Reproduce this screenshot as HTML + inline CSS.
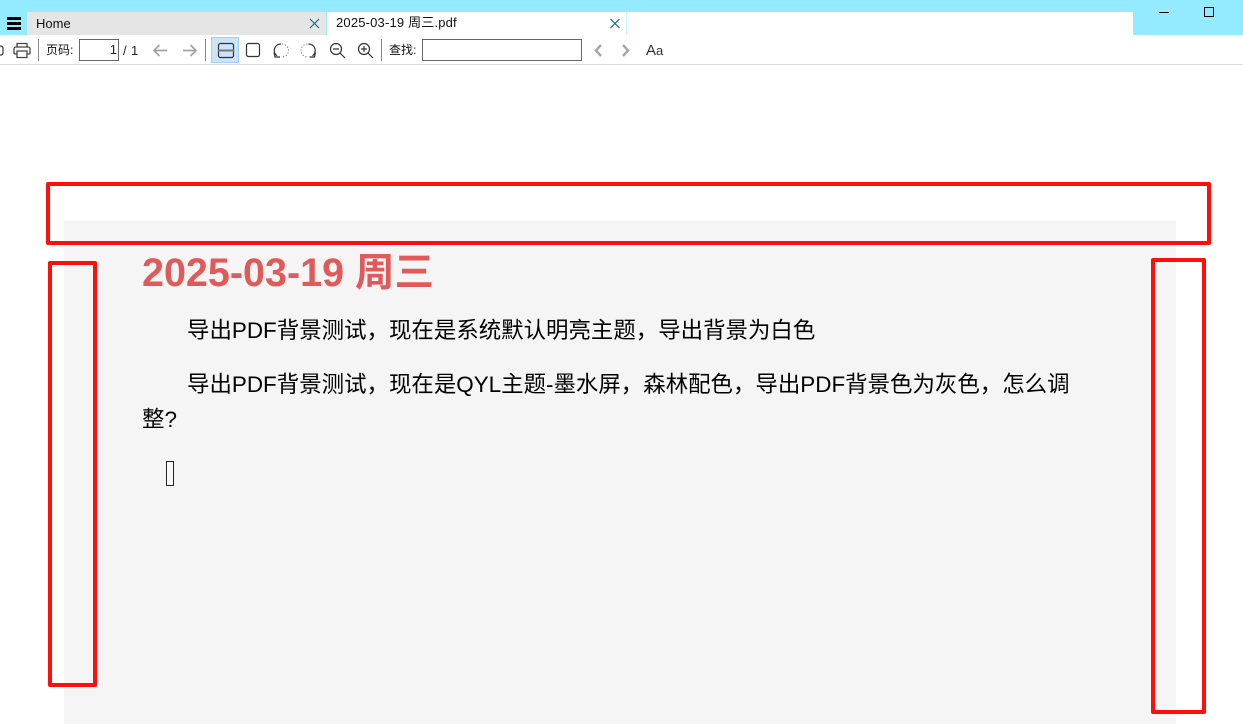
<!DOCTYPE html>
<html lang="zh"><head><meta charset="utf-8"><title>PDF</title>
<style>
html,body{margin:0;padding:0;width:1243px;height:724px;overflow:hidden;background:#fff;font-family:"Liberation Sans","Noto Sans CJK SC",sans-serif;color:#000}
.a{position:absolute}
.t{position:absolute;white-space:nowrap}
.sep{position:absolute;top:39px;width:1px;height:22px;background:#888}
svg{position:absolute;overflow:visible}
</style></head><body>
<div class="a" style="left:0;top:0;width:1243px;height:35px;background:#94ebff"></div>
<div class="a" style="left:0;top:35px;width:1243px;height:29px;background:#fff"></div>
<div class="a" style="left:0;top:64px;width:1243px;height:1px;background:#dcdcdc"></div>
<div class="a" style="left:27px;top:12px;width:299px;height:23px;background:#e5e5e5"></div>
<div class="a" style="left:327px;top:12px;width:806px;height:23px;background:#fff"></div>
<div class="a" style="left:626px;top:12px;width:1px;height:23px;background:#c8f3ff"></div>
<div class="a" style="left:7px;top:17px;width:14px;height:3px;background:#000"></div>
<div class="a" style="left:7px;top:22px;width:14px;height:3px;background:#000"></div>
<div class="a" style="left:7px;top:27px;width:14px;height:3px;background:#000"></div>
<div class="t" style="left:36px;top:15px;font-size:13px;line-height:17px;color:#111">Home</div>
<div class="t" style="left:336px;top:14px;font-size:13px;line-height:17px;color:#111;letter-spacing:.18px">2025-03-19 周三.pdf</div>
<svg style="left:0;top:0" width="1243" height="70" fill="none">
<path d="M310 19l9 9M319 19l-9 9M610.500 19l9 9M619.500 19l-9 9" stroke="#0d6e82" stroke-width="1.200"/>
<path d="M1159 12.500h10" stroke="#000"/>
<rect x="1204.500" y="7.500" width="9" height="9" stroke="#000"/>
<path d="M-1 46h2a2 2 0 0 1 2 2v5a2 2 0 0 1-2 2h-2" stroke="#444" stroke-width="1.300"/>
<path d="M17 47v-3.500h10V47M17 54h-2a1 1 0 0 1-1-1v-4a2 2 0 0 1 2-2h12a2 2 0 0 1 2 2v4a1 1 0 0 1-1 1h-2M17 51h10v6.500H17z" stroke="#444" stroke-width="1.300"/>
<path d="M154 50.500h13M159.500 45l-5.500 5.500 5.500 5.500M196 50.500h-13M190.500 45l5.500 5.500-5.500 5.500" stroke="#a3a3a3" stroke-width="1.700"/>
<rect x="211.500" y="37.500" width="27" height="25" fill="#cce4f7" stroke="#9fd0f5"/>
<rect x="218.500" y="43.500" width="15" height="14" rx="2" stroke="#333" stroke-width="1.200"/>
<path d="M218 50.500h16" stroke="#777" stroke-width="2"/>
<rect x="246.500" y="43.500" width="13" height="13" rx="2" stroke="#333" stroke-width="1.200"/>
<path d="M281 44a6.500 6.500 0 0 0-4 11.800" stroke="#333" stroke-width="1.200"/>
<path d="M274 52.500l1 4.500h5" stroke="#333" stroke-width="1.200"/>
<path d="M282 44a6.500 6.500 0 0 1 0 13" stroke="#777" stroke-dasharray="1.300 1.700"/>
<path d="M308.500 44a6.500 6.500 0 0 1 4 11.800" stroke="#333" stroke-width="1.200"/>
<path d="M315.500 52.500l-1 4.500h-5" stroke="#333" stroke-width="1.200"/>
<path d="M307.500 44a6.500 6.500 0 0 0 0 13" stroke="#777" stroke-dasharray="1.300 1.700"/>
<circle cx="336" cy="49" r="5.500" stroke="#333" stroke-width="1.200"/><path d="M333 49h6M340 53l5 5" stroke="#333" stroke-width="1.200"/>
<circle cx="364" cy="49" r="5.500" stroke="#333" stroke-width="1.200"/><path d="M361 49h6M364 46v6M368 53l5 5" stroke="#333" stroke-width="1.200"/>
<path d="M601 45l-5 5.500 5 5.500M623 45l5 5.500-5 5.500" stroke="#a3a3a3" stroke-width="2.400"/>
</svg>
<div class="sep" style="left:38px"></div>
<div class="sep" style="left:205px"></div>
<div class="sep" style="left:381px"></div>
<div class="t" style="left:46px;top:42px;font-size:12px;line-height:17px;color:#111">页码:</div>
<div class="a" style="left:79px;top:39px;width:38px;height:20px;border:1px solid #666;background:#fff;font-size:13px;line-height:20px;text-align:right"><span style="padding-right:1px;color:#222">1</span></div>
<div class="t" style="left:123px;top:42px;font-size:13px;line-height:17px;color:#222;letter-spacing:.4px">/ 1</div>
<div class="t" style="left:389px;top:42px;font-size:12px;line-height:17px;color:#111">查找:</div>
<div class="a" style="left:422px;top:39px;width:158px;height:20px;border:1px solid #666;background:#fff"></div>
<div class="t" style="left:646px;top:41px;font-size:15px;line-height:19px;color:#333">A<span style="font-size:13px">a</span></div>

<div class="a" style="left:64px;top:221px;width:1112px;height:503px;background:#f5f5f5"></div>
<div class="t" style="left:142px;top:248px;font-size:39.500px;line-height:50px;font-weight:bold;color:#e05a5a">2025-03-19 周三</div>
<div class="t" style="left:187px;top:315px;font-size:22.450px;line-height:32px;color:#000">导出PDF背景测试，现在是系统默认明亮主题，导出背景为白色</div>
<div class="t" style="left:187px;top:369px;font-size:22.450px;line-height:32px;color:#000">导出PDF背景测试，现在是QYL主题-墨水屏，森林配色，导出PDF背景色为灰色，怎么调</div>
<div class="t" style="left:142px;top:404px;font-size:22.450px;line-height:32px;color:#000">整?</div>
<div class="a" style="left:166px;top:461px;width:6px;height:23px;border:1px solid #222;background:#f8f8f8"></div>

<div class="a" style="left:46px;top:182px;width:1165px;height:63px;box-sizing:border-box;border:4px solid #fe0f0a;border-radius:2px"></div>
<div class="a" style="left:48px;top:261px;width:49px;height:426px;box-sizing:border-box;border:4px solid #fe0f0a;border-radius:2px"></div>
<div class="a" style="left:1151px;top:258px;width:55px;height:456px;box-sizing:border-box;border:4px solid #fe0f0a;border-radius:2px"></div>
</body></html>
